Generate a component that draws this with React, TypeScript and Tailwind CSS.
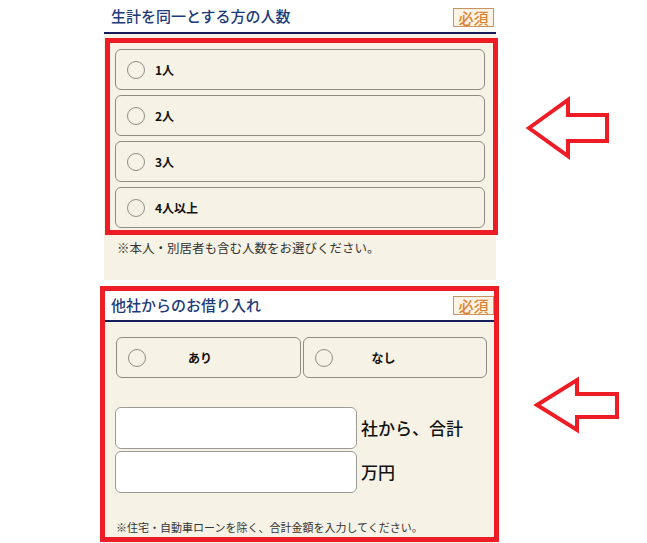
import React from "react";

const jp = { fontFamily: '"Noto Sans CJK JP", "Noto Sans", sans-serif' };

function Badge() {
  return (
    <div className="h-[19px] w-[41px] mb-[5px] mr-[2px] border border-[#c8935f] bg-[#fdf3e4] text-[#db8434] text-[15px] leading-[17px] text-center font-medium">
      必須
    </div>
  );
}

function Radio() {
  return <div className="w-[18px] h-[18px] rounded-full border border-[#8f8f88] bg-[#f6f2e5] shrink-0" />;
}

function OptionRow({ label }: { label: string }) {
  return (
    <div className="h-[41px] rounded-[6px] border border-[#8e8c82] bg-[#f6f2e5] flex items-center pl-[11px]">
      <Radio />
      <span className="ml-[10px] text-[12px] font-bold text-[#111]">{label}</span>
    </div>
  );
}

function HalfOption({ label, ml }: { label: string; ml: string }) {
  return (
    <div className="h-[41px] rounded-[6px] border border-[#8e8c82] bg-[#f6f2e5] flex items-center pl-[11px]">
      <Radio />
      <span className={`${ml} text-[12px] font-bold text-[#111]`}>{label}</span>
    </div>
  );
}

export default function App() {
  return (
    <div className="relative w-[647px] h-[543px] overflow-hidden bg-white" style={jp}>
      <div className="ml-[104px] w-[392px]">
        {/* Section 1 */}
        <div className="h-[34px] flex items-end justify-between border-b-2 border-[#141c5c]">
          <div className="pl-[7px] mb-[7px] text-[15px] leading-[18px] font-medium text-[#1d3a7a]">生計を同一とする方の人数</div>
          <Badge />
        </div>
        <div className="h-[246px] bg-[#f6f2e5] pt-[15px]">
          <div className="px-[11px] flex flex-col gap-[5px]">
            <OptionRow label="1人" />
            <OptionRow label="2人" />
            <OptionRow label="3人" />
            <OptionRow label="4人以上" />
          </div>
          <div className="pl-[13px] mt-[11px] text-[12.5px] leading-[17px] text-[#333]">※本人・別居者も含む人数をお選びください。</div>
        </div>

        {/* Section 2 */}
        <div className="mt-[8px] h-[34px] flex items-end justify-between border-b-2 border-[#141c5c]">
          <div className="pl-[7px] mb-[6px] text-[15px] leading-[18px] font-medium text-[#1d3a7a]">他社からのお借り入れ</div>
          <Badge />
        </div>
        <div className="h-[230px] bg-[#f6f2e5] pt-[15px]">
          <div className="pl-[12px] pr-[9px] grid grid-cols-2 gap-[2px]">
            <HalfOption label="あり" ml="ml-[42px]" />
            <HalfOption label="なし" ml="ml-[39px]" />
          </div>
          <div className="mt-[29px] pl-[11px] flex flex-col gap-[2px]">
            <div className="flex items-center">
              <div className="w-[242px] h-[42px] rounded-[6px] border border-[#9a9a96] bg-white" />
              <span className="ml-[4px] text-[17px] font-medium text-[#111]">社から、合計</span>
            </div>
            <div className="flex items-center">
              <div className="w-[242px] h-[42px] rounded-[6px] border border-[#9a9a96] bg-white" />
              <span className="ml-[4px] text-[17px] font-medium text-[#111]">万円</span>
            </div>
          </div>
          <div className="pl-[12px] mt-[27px] text-[11px] leading-[15px] text-[#333]">※住宅・自動車ローンを除く、合計金額を入力してください。</div>
        </div>
      </div>

      {/* Red annotation boxes */}
      <div className="absolute left-[105px] top-[38px] w-[393px] h-[197px] border-[5px] border-[#ee1c25]" />
      <div className="absolute left-[100px] top-[286px] w-[399px] h-[256px] border-[5px] border-[#ee1c25]" />

      {/* Arrows */}
      <svg className="absolute left-0 top-0" width="647" height="543" viewBox="0 0 647 543">
        <polygon
          points="529,128 568,100 568,115 607,115 607,141 568,141 568,156"
          fill="white"
          stroke="#ee1c25"
          strokeWidth="4"
          strokeLinejoin="miter"
        />
        <polygon
          points="537,405 577,380 577,394 617,394 617,417 577,417 577,430"
          fill="white"
          stroke="#ee1c25"
          strokeWidth="4"
          strokeLinejoin="miter"
        />
      </svg>
    </div>
  );
}
